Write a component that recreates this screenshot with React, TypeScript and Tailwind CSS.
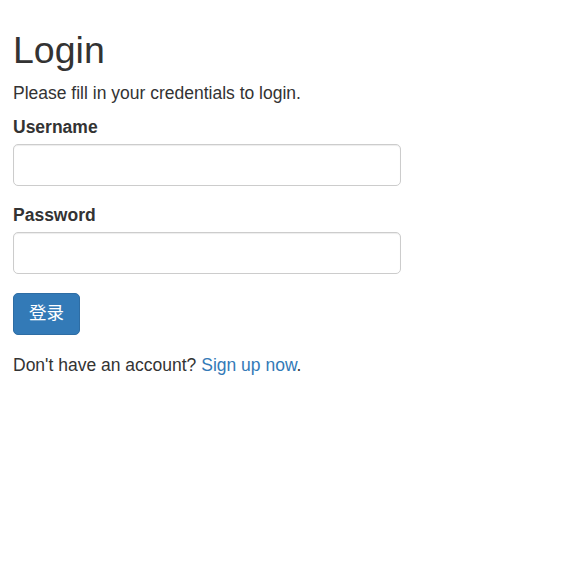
export default function App() {
  return (
    <div className="min-h-[562px] bg-white pl-[13px] pt-[30px] font-['Liberation_Sans','Noto_Sans_CJK_SC',Arial,sans-serif] text-[17.5px] leading-[25px] text-[#333333]">
      <div className="w-[388px]">
        {/* Título */}
        <h2 className="text-[37.5px] leading-[41px] font-normal">Login</h2>
        <p className="mt-[9.5px]">Please fill in your credentials to login.</p>

        <form className="mt-[9.5px]" onSubmit={(e) => e.preventDefault()}>
          {/* Usuario */}
          <div>
            <label className="block font-bold">Username</label>
            <input
              type="text"
              className="mt-[4px] block h-[42px] w-full rounded-[5px] border border-[#cccccc] bg-white px-[15px] shadow-[inset_0_1px_1px_rgba(0,0,0,0.075)] outline-none"
            />
          </div>

          {/* Contraseña */}
          <div className="mt-[16.5px]">
            <label className="block font-bold">Password</label>
            <input
              type="password"
              className="mt-[4.5px] block h-[42px] w-full rounded-[5px] border border-[#cccccc] bg-white px-[15px] shadow-[inset_0_1px_1px_rgba(0,0,0,0.075)] outline-none"
            />
          </div>

          <div className="mt-[19px]">
            <button
              type="submit"
              className="h-[41.5px] rounded-[5px] border border-[#2e6da4] bg-[#337ab7] px-[15px] text-[17.5px] leading-[25px] text-white"
            >
              登录
            </button>
          </div>
        </form>

        <p className="mt-[18px]">
          Don't have an account?{' '}
          <a href="#" className="text-[#337ab7]">
            Sign up now
          </a>
          .
        </p>
      </div>
    </div>
  )
}
